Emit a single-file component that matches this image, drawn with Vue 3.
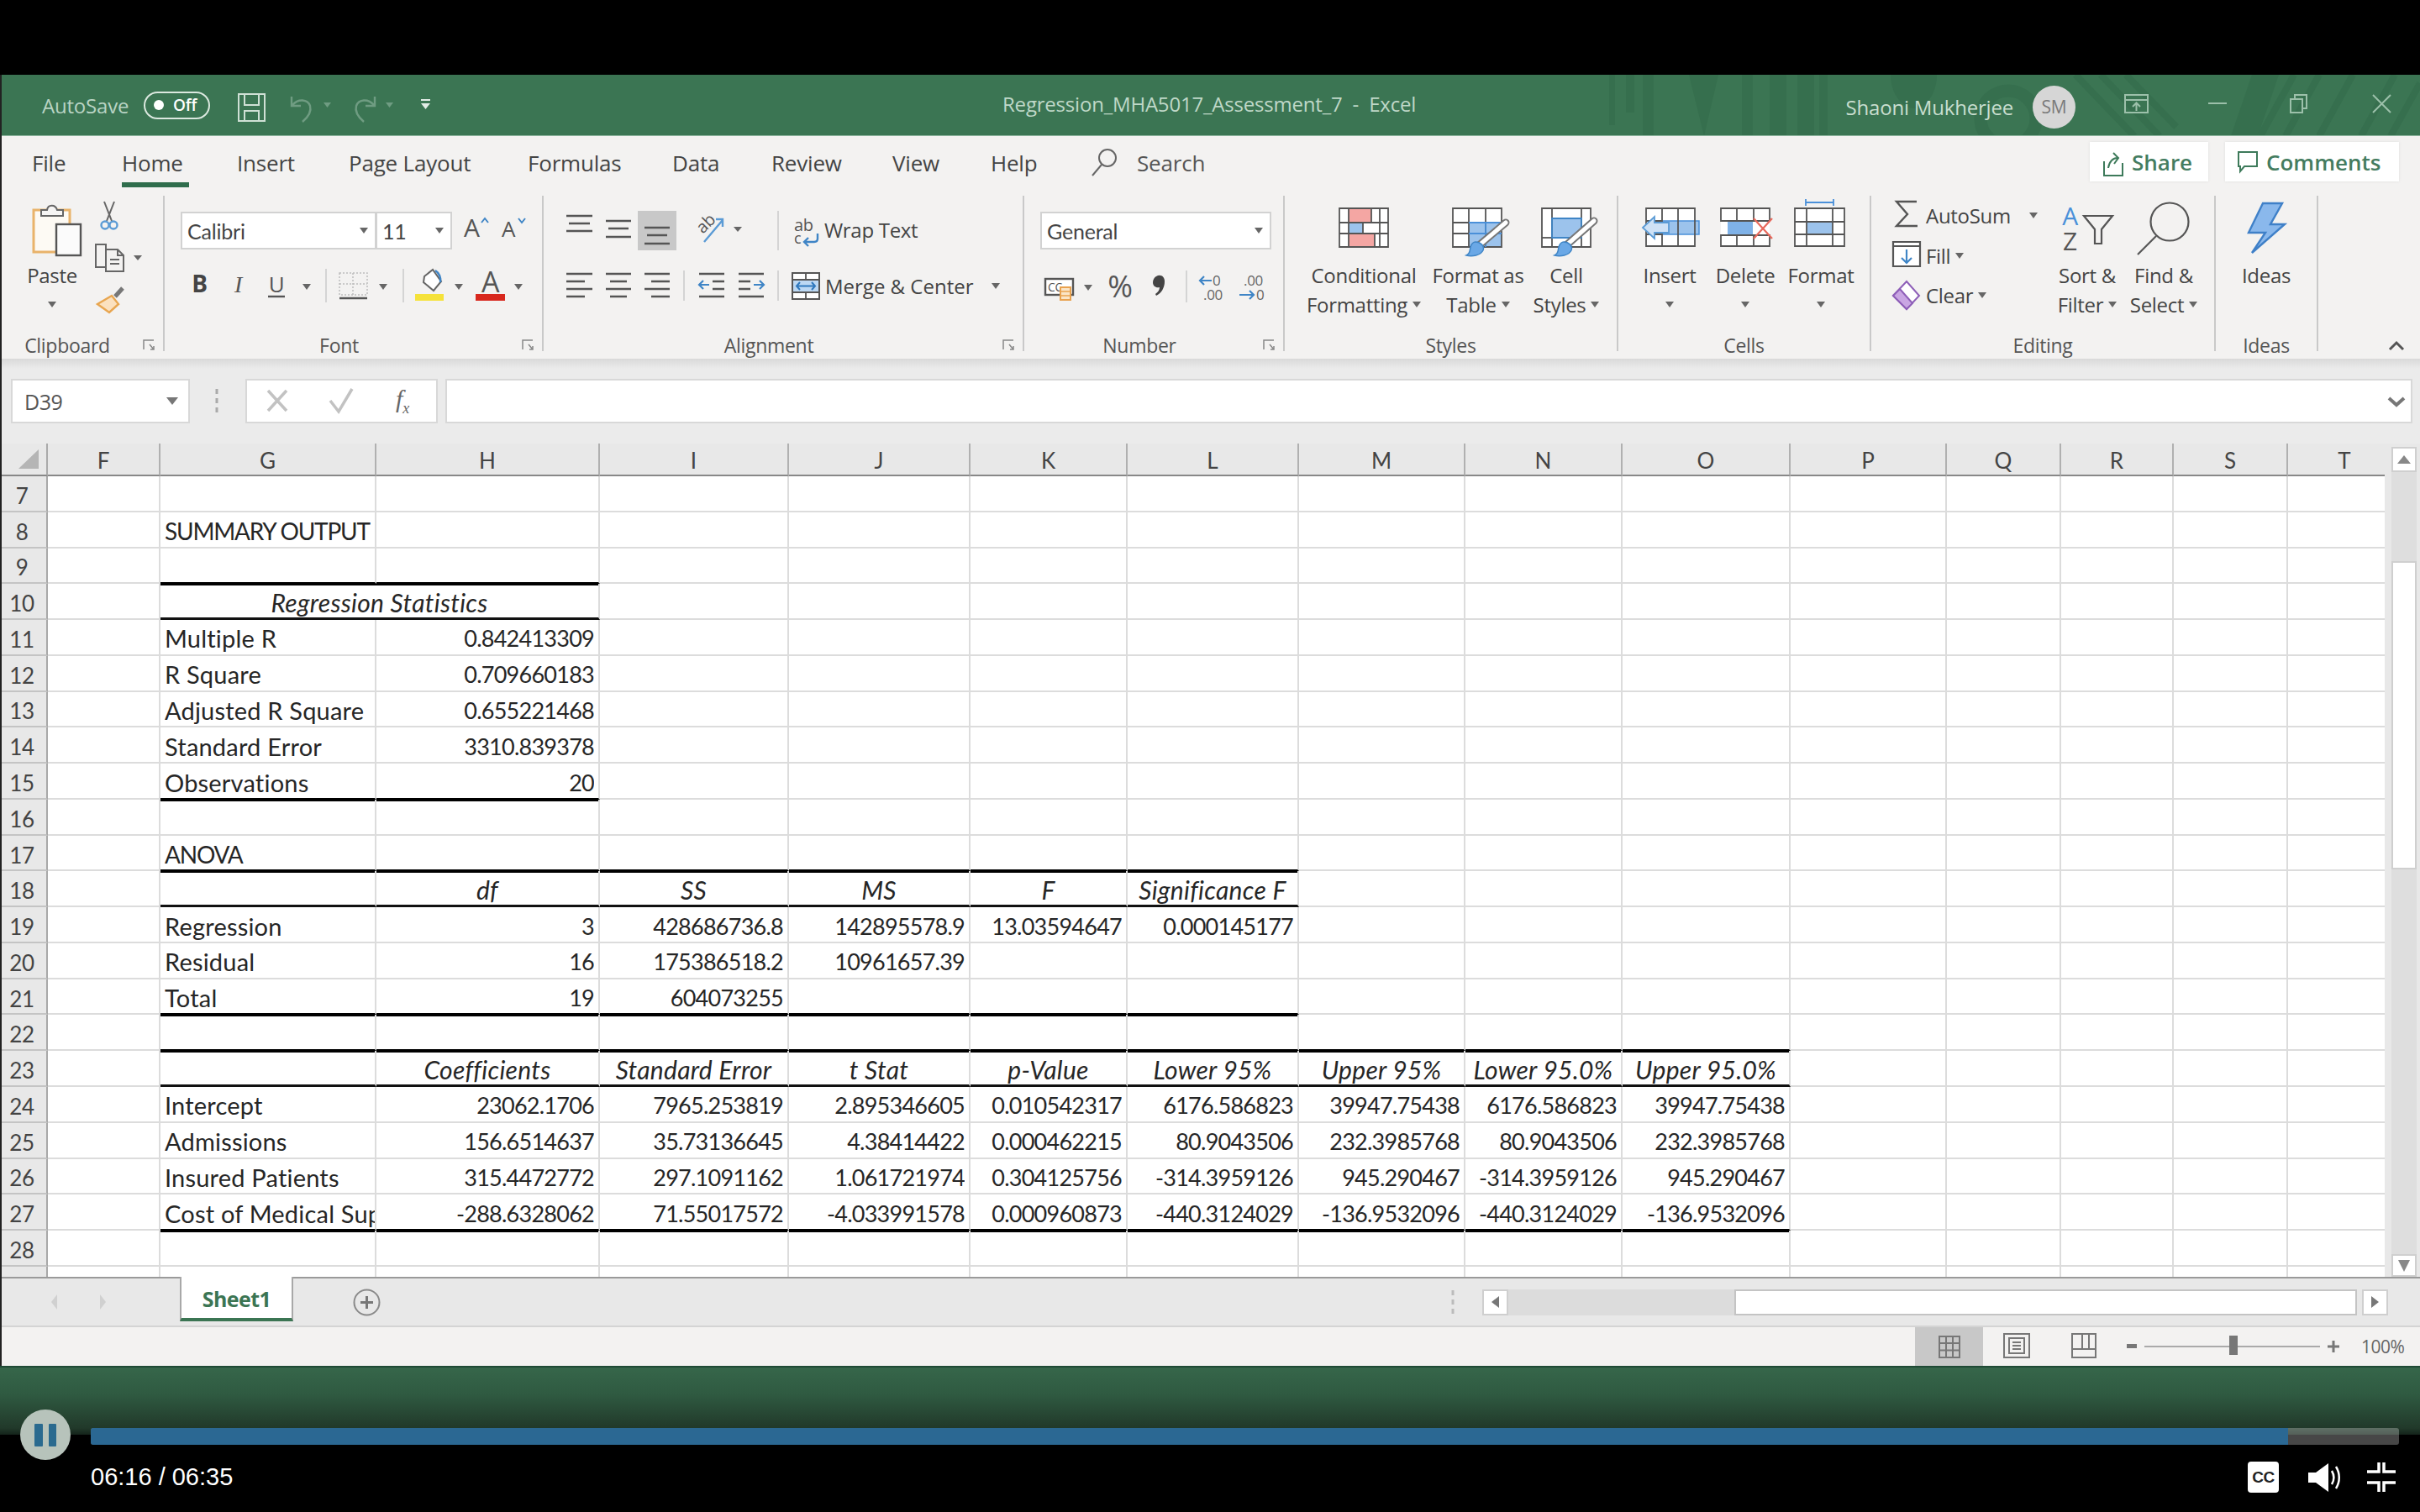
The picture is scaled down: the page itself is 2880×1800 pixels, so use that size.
<script setup>
const columns = ['F', 'G', 'H', 'I', 'J', 'K', 'L', 'M', 'N', 'O', 'P', 'Q', 'R', 'S', 'T']

// regression output, keyed by row number then column
const sheetData = {
  8: { G: 'SUMMARY OUTPUT' },
  10: { G: 'Regression Statistics' },
  11: { G: 'Multiple R', H: '0.842413309' },
  12: { G: 'R Square', H: '0.709660183' },
  13: { G: 'Adjusted R Square', H: '0.655221468' },
  14: { G: 'Standard Error', H: '3310.839378' },
  15: { G: 'Observations', H: '20' },
  17: { G: 'ANOVA' },
  18: { H: 'df', I: 'SS', J: 'MS', K: 'F', L: 'Significance F' },
  19: { G: 'Regression', H: '3', I: '428686736.8', J: '142895578.9', K: '13.03594647', L: '0.000145177' },
  20: { G: 'Residual', H: '16', I: '175386518.2', J: '10961657.39' },
  21: { G: 'Total', H: '19', I: '604073255' },
  23: {
    H: 'Coefficients', I: 'Standard Error', J: 't Stat', K: 'p-Value', L: 'Lower 95%',
    M: 'Upper 95%', N: 'Lower 95.0%', O: 'Upper 95.0%'
  },
  24: {
    G: 'Intercept', H: '23062.1706', I: '7965.253819', J: '2.895346605', K: '0.010542317',
    L: '6176.586823', M: '39947.75438', N: '6176.586823', O: '39947.75438'
  },
  25: {
    G: 'Admissions', H: '156.6514637', I: '35.73136645', J: '4.38414422', K: '0.000462215',
    L: '80.9043506', M: '232.3985768', N: '80.9043506', O: '232.3985768'
  },
  26: {
    G: 'Insured Patients', H: '315.4472772', I: '297.1091162', J: '1.061721974', K: '0.304125756',
    L: '-314.3959126', M: '945.290467', N: '-314.3959126', O: '945.290467'
  },
  27: {
    G: 'Cost of Medical Supplies', H: '-288.6328062', I: '71.55017572', J: '-4.033991578', K: '0.000960873',
    L: '-440.3124029', M: '-136.9532096', N: '-440.3124029', O: '-136.9532096'
  }
}

// table rules: row -> last column and weight, always starting at G
const rules = {
  9: ['H', 'thick'],
  10: ['H', 'thin'],
  15: ['H', 'thick'],
  17: ['L', 'thick'],
  18: ['L', 'thin'],
  21: ['L', 'thick'],
  22: ['O', 'thick'],
  23: ['O', 'thin'],
  27: ['O', 'thick']
}

function cellsFor(n) {
  const data = sheetData[n] || {}
  const rule = rules[n]
  const out = []
  columns.forEach((col, i) => {
    if (n == 10 && col == 'H') return
    const cls = []
    if (rule && i >= 1 && i <= columns.indexOf(rule[0])) cls.push(rule[1])
    if (n == 10 && col == 'G') cls.push('merged', 'head')
    else if (n == 18 || n == 23) cls.push('head')
    else if (n == 8 || n == 17) cls.push('caps')
    else if (col == 'G') cls.push('label')
    else cls.push('num')
    out.push({ col, text: data[col] || '', cls })
  })
  return out
}

const rows = []
for (let n = 7; n <= 29; n++) {
  rows.push({ n, label: n < 29 ? n : '', cells: cellsFor(n) })
}

const progress = (376 / 395) * 100
</script>

<template>
  <div class="page">
    <div class="topblack"></div>

    <div class="window">
      <div class="titlebar">
        <svg class="pattern" width="1030" height="72" viewBox="0 0 1030 72">
          <g fill="#366f4e">
            <rect x="65" width="7" height="60" /><rect x="85" width="10" height="45" /><rect x="105" width="13" height="73" />
            <path d="M160 0h35l-17 73z" />
            <rect x="223" width="13" height="73" /><rect x="256" width="20" height="73" /><rect x="289" width="20" height="73" /><rect x="315" width="10" height="73" />
            <path d="M400 0h55c0 25-15 40-27 40s-28-15-28-40z" />
            <path d="M830 0h32l-25 73h-32z" />
          </g>
          <g fill="none" stroke="#366f4e">
            <circle cx="540" cy="52" r="33" stroke-width="15" />
            <path stroke-width="8" d="M620 0l70 73M650 0l70 73M680 0l60 62M880 0l-40 73M910 0l-40 73M950 0l-40 73M1000 0l-40 73M1030 10l-35 63" />
          </g>
        </svg>
        <div class="title-left">
          <span class="autosave">AutoSave</span>
          <span class="toggle"><i></i><b>Off</b></span>
          <svg class="qat" width="235" height="40" viewBox="0 0 235 40">
            <g fill="none" stroke="#cfe0d5" stroke-width="2">
              <path d="M1 7h31v32H1zM8 7v13h17V7M8 39V27h17v12" />
            </g>
            <g fill="none" stroke="#6f9c82" stroke-width="2.4">
              <path d="M64 10v11h11M65 20c7-8 18-7 21 1 2 7-2 13-9 19" />
              <path d="M163 10v11h-11M162 20c-7-8-18-7-21 1-2 7 2 13 9 19" />
            </g>
            <path fill="#6f9c82" d="M102 17h9l-4.500 6zM176 17h9l-4.500 6z" />
            <path fill="#e2ece6" d="M218 13h11v2h-11zM218 18h11l-5.500 7z" />
          </svg>
        </div>
        <div class="doc-title">Regression_MHA5017_Assessment_7&nbsp; -&nbsp; Excel</div>
        <div class="title-right">
          <span class="user">Shaoni Mukherjee</span>
          <span class="avatar">SM</span>
          <svg class="winbtns" width="317" height="25" viewBox="0 0 317 25">
            <g fill="none" stroke="#9cc0aa" stroke-width="2">
              <path d="M1 2h27v21H1zM1 8h27M14.500 21V12M10 16l4.500-4.500L19 16" />
              <path d="M100 12h22" />
              <path d="M198 7h14v16h-14zM203 7V2h14v16h-5" />
              <path d="M296 2l21 21M317 2l-21 21" />
            </g>
          </svg>
        </div>
      </div>

      <div class="tabs">
        <div class="tablist">
          <span>File</span>
          <span class="active">Home</span>
          <span>Insert</span>
          <span>Page Layout</span>
          <span>Formulas</span>
          <span>Data</span>
          <span>Review</span>
          <span>View</span>
          <span>Help</span>
          <svg width="32" height="36" viewBox="0 0 32 36">
            <g fill="none" stroke="#666" stroke-width="2">
              <circle cx="20" cy="12" r="10" /><path d="M13 20L2 33" />
            </g>
          </svg>
          <span class="search">Search</span>
        </div>
        <div class="share-btns">
          <button class="share">
            <svg width="24" height="34" viewBox="0 0 24 34">
              <g fill="none" stroke="#3d7a5a" stroke-width="2">
                <path d="M1 16v17h22V18M6 24c1-8 6-12 11-12M12 6l6 6-5 7" />
              </g>
            </svg>
            Share
          </button>
          <button class="comments">
            <svg width="24" height="30" viewBox="0 0 24 30">
              <path fill="none" stroke="#3d7a5a" stroke-width="2" d="M1 3h22v17H8l-5 6v-6H1z" />
            </svg>
            Comments
          </button>
        </div>
      </div>

      <div class="ribbon">
        <!-- Clipboard -->
        <section class="group g-clip">
          <div class="gbody">
            <div class="big big-74">
              <svg width="74" height="77" viewBox="0 0 74 77">
                <rect x="15" y="17" width="43" height="50" fill="#fdfaf4" stroke="#e9b36b" stroke-width="3" />
                <path d="M24 24v-7h7c1-7 10-7 12 0h7v7z" fill="#f6f5f4" stroke="#666" stroke-width="2" />
                <rect x="42" y="34" width="29" height="37" fill="#fbfbfb" stroke="#555" stroke-width="2.400" />
              </svg>
              <span class="lbl">Paste</span>
              <span class="lbl"><i class="caret"></i></span>
            </div>
            <svg class="clip-tools" width="60" height="135" viewBox="0 0 60 135">
              <g fill="none" stroke="#666" stroke-width="2">
                <path d="M14 23L23 0M20 23L11 0" />
                <path d="M1 51h12v27H1zM13 57h14l7 7v19H13zM27 57v7h7M18 69h11M18 74h11" />
              </g>
              <g fill="none" stroke="#5b9bd5" stroke-width="2.400">
                <circle cx="12" cy="28" r="4.500" /><circle cx="22" cy="28" r="4.500" />
              </g>
              <path d="M46 64h10l-5 6z" fill="#666" />
              <path d="M3 122l17-10 8 10-11 10z" fill="#fbe1bf" stroke="#e8a650" stroke-width="2.400" />
              <path d="M24 113l9-10" stroke="#777" stroke-width="5" />
            </svg>
          </div>
          <div class="glabel"><span>Clipboard</span><svg class="launch" viewBox="0 0 16 14" width="16" height="14"><path fill="none" stroke="#888" stroke-width="1.500" d="M1 12V1h12M8 6l5 6M13 8v4H9" /></svg></div>
        </section>

        <!-- Font -->
        <section class="group g-font">
          <div class="gbody col">
            <div class="frow">
              <div class="combo w233">Calibri<i class="caret"></i></div>
              <div class="combo w91">11<i class="caret"></i></div>
              <svg width="87" height="45" viewBox="0 0 87 45">
                <text x="14" y="30" class="gl" font-size="30" fill="#555">A</text>
                <path d="M35 13l4-5 4 5" fill="none" stroke="#3f85c6" stroke-width="2" />
                <text x="59" y="30" class="gl" font-size="26" fill="#555">A</text>
                <path d="M79 8l4 5 4-5" fill="none" stroke="#3f85c6" stroke-width="2" />
              </svg>
            </div>
            <svg class="font-r2" width="414" height="40" viewBox="0 0 414 40">
              <text x="23.500" y="28" class="gl mid" font-size="28" font-weight="700" fill="#444">B</text>
              <text x="69.500" y="28" class="gl mid it" font-size="28" fill="#555">I</text>
              <text x="115" y="28" class="gl mid" font-size="26" fill="#555">U</text>
              <path d="M105 33h20" stroke="#555" stroke-width="2.400" />
              <path d="M146 18h10l-5 7zM237 18h10l-5 7zM327 18h10l-5 7zM398 18h10l-5 7z" fill="#666" />
              <path d="M174 0v40M266 0v40" stroke="#d4d4d4" stroke-width="2" />
              <g fill="none" stroke="#bdbdbd" stroke-width="1.500" stroke-dasharray="2 2">
                <path d="M190 5h33v26h-33zM206 5v26M190 18h33" />
              </g>
              <path d="M190 35h33" stroke="#555" stroke-width="2.600" />
              <path d="M291 9l10-8 10 14-9 11-12-10z" fill="#fff" stroke="#666" stroke-width="2" />
              <path d="M304 2c5 3 7 9 6 14" fill="none" stroke="#3f85c6" stroke-width="2.400" />
              <rect x="280" y="30" width="34" height="8" fill="#f5e23a" />
              <text x="369.500" y="28" class="gl mid" font-size="34" fill="#555">A</text>
              <rect x="352" y="30" width="35" height="8" fill="#d8281e" />
            </svg>
          </div>
          <div class="glabel"><span>Font</span><svg class="launch" viewBox="0 0 16 14" width="16" height="14"><path fill="none" stroke="#888" stroke-width="1.500" d="M1 12V1h12M8 6l5 6M13 8v4H9" /></svg></div>
        </section>

        <!-- Alignment -->
        <section class="group g-align">
          <div class="gbody col">
            <div class="arow">
              <svg width="312" height="47" viewBox="0 0 312 47">
                <rect x="93" width="46" height="47" fill="#c8c8c8" />
                <g stroke="#555" stroke-width="2.600">
                  <path d="M8 6h31M11 15h25M8 24h31" />
                  <path d="M55 12h30M58 21h24M55 31h30" />
                  <path d="M101 20h30M104 29h24M101 39h30" />
                </g>
                <text x="164" y="24" class="gl" font-size="20" fill="#555" transform="rotate(-45 172 18)">ab</text>
                <path d="M172 37l22-26M186 10h8v9" fill="none" stroke="#5b9bd5" stroke-width="2.400" />
                <path d="M207 19h10l-5 6z" fill="#666" />
                <path d="M260 0v47" stroke="#d4d4d4" stroke-width="2" />
                <text x="279" y="24" class="gl" font-size="20" fill="#555">ab</text>
                <text x="279" y="39" class="gl" font-size="18" fill="#555">c</text>
                <path d="M307 27v6c0 3-2 4-4 4h-12M296 32l-5 5 5 5" fill="none" stroke="#3f85c6" stroke-width="2.400" />
              </svg>
              <span class="rtext">Wrap Text</span>
            </div>
            <div class="arow a2">
              <svg width="310" height="36" viewBox="0 0 310 36">
                <g stroke="#555" stroke-width="2.600">
                  <path d="M8 4h31M8 13h22M8 22h31M8 31h22" />
                  <path d="M55 4h30M60 13h20M55 22h30M60 31h20" />
                  <path d="M101 4h30M109 13h22M101 22h30M109 31h22" />
                  <path d="M166 4h30M182 13h14M182 22h14M166 31h30" />
                  <path d="M213 4h30M213 13h14M213 22h14M213 31h30" />
                </g>
                <path d="M178 17h-12M171 12l-5 5 5 5M231 17h12M238 12l5 5-5 5" fill="none" stroke="#3f85c6" stroke-width="2.200" />
                <path d="M148 0v36M260 0v36" stroke="#d4d4d4" stroke-width="2" />
                <rect x="277" y="3" width="32" height="31" fill="#fff" stroke="#555" stroke-width="2" />
                <rect x="278" y="11" width="30" height="15" fill="#bcd8f3" />
                <path d="M277 11h32M277 26h32M293 3v8M293 26v8" stroke="#555" stroke-width="1.800" />
                <path d="M282 18.500h22M286 14l-4 4.500 4 4.500M300 14l4 4.500-4 4.500" fill="none" stroke="#2f78bd" stroke-width="2" />
              </svg>
              <span class="rtext r2">Merge &amp; Center</span>
              <i class="caret merge-caret"></i>
            </div>
          </div>
          <div class="glabel"><span>Alignment</span><svg class="launch" viewBox="0 0 16 14" width="16" height="14"><path fill="none" stroke="#888" stroke-width="1.500" d="M1 12V1h12M8 6l5 6M13 8v4H9" /></svg></div>
        </section>

        <!-- Number -->
        <section class="group g-number">
          <div class="gbody col">
            <div class="combo w275">General<i class="caret"></i></div>
            <svg class="num-r2" width="275" height="38" viewBox="0 0 275 38">
              <rect x="6" y="10" width="33" height="19" fill="#fff" stroke="#555" stroke-width="2.400" />
              <text x="9" y="25" class="gl" font-size="14" fill="#555">CC</text>
              <path d="M24 20h12v15H24z" fill="#fbe5c6" stroke="#e9a24f" stroke-width="2" />
              <path d="M24 25h12M24 30h12" stroke="#e9a24f" stroke-width="1.500" />
              <path d="M52 17h10l-5 7z" fill="#666" />
              <text x="95" y="32" class="gl mid" font-size="36" fill="#555">%</text>
              <path d="M138 7c5-3 10 0 10 6 0 8-4 14-10 17l-1-2c3-2 5-5 5-8-4 1-8-1-8-6 0-3 2-6 4-7z" fill="#444" />
              <path d="M174 0v38" stroke="#d4d4d4" stroke-width="2" />
              <text x="205" y="18" class="gl" font-size="17" fill="#666">0</text>
              <text x="194" y="35" class="gl" font-size="17" fill="#666">.00</text>
              <path d="M204 12h-14M195 7l-5 5 5 5" fill="none" stroke="#3f85c6" stroke-width="2.200" />
              <text x="242" y="18" class="gl" font-size="17" fill="#666">.00</text>
              <text x="257" y="35" class="gl" font-size="17" fill="#666">0</text>
              <path d="M237 29h17M249 24l5 5-5 5" fill="none" stroke="#3f85c6" stroke-width="2.200" />
            </svg>
          </div>
          <div class="glabel"><span>Number</span><svg class="launch" viewBox="0 0 16 14" width="16" height="14"><path fill="none" stroke="#888" stroke-width="1.500" d="M1 12V1h12M8 6l5 6M13 8v4H9" /></svg></div>
        </section>

        <!-- Styles -->
        <section class="group g-styles">
          <div class="gbody">
            <div class="big big-130">
              <svg width="60" height="77" viewBox="0 0 60 77">
                <rect x="1" y="15" width="58" height="46" fill="#fff" />
                <rect x="12" y="15" width="27" height="17" fill="#f4a6a3" />
                <rect x="12" y="32" width="17" height="13" fill="#9cc3ec" />
                <rect x="12" y="45" width="31" height="16" fill="#f4a6a3" />
                <path d="M1 15h58v46H1zM1 32h58M1 45h58M12 15v46M39 15v17M49 15v46M43 45v16M29 32v13" fill="none" stroke="#555" stroke-width="1.800" />
              </svg>
              <span class="lbl">Conditional</span>
              <span class="lbl">Formatting<i class="caret c-inl"></i></span>
            </div>
            <div class="big big-130">
              <svg width="66" height="77" viewBox="0 0 66 77">
                <rect x="3" y="15" width="58" height="46" fill="#fff" />
                <rect x="22" y="32" width="39" height="29" fill="#9cc3ec" />
                <path d="M3 15h58v46H3zM3 32h58M3 45h58M22 15v46M42 15v46" fill="none" stroke="#555" stroke-width="1.800" />
                <path d="M22 32h39M22 45h39M42 32v29" fill="none" stroke="#4a90d9" stroke-width="1.800" />
                <path d="M66 32L33 60" stroke="#777" stroke-width="9" stroke-linecap="round" />
                <path d="M66 32L33 60" stroke="#fff" stroke-width="5" stroke-linecap="round" />
                <path d="M30 55c6 0 11 5 9 10-3 6-13 8-20 6 5-2 4-6 5-10 1-3 3-6 6-6z" fill="#6aa8e6" stroke="#3f85c6" stroke-width="1.500" />
              </svg>
              <span class="lbl">Format as</span>
              <span class="lbl">Table<i class="caret c-inl"></i></span>
            </div>
            <div class="big big-68">
              <svg width="66" height="77" viewBox="0 0 66 77">
                <rect x="4" y="15" width="58" height="46" fill="#fff" />
                <rect x="16" y="27" width="35" height="23" fill="#9cc3ec" />
                <path d="M4 15h58v46H4zM16 15v46M51 15v46" fill="none" stroke="#555" stroke-width="1.800" />
                <path d="M4 50h12" stroke="#555" stroke-width="1.800" />
                <path d="M16 27h35v23H16z" fill="none" stroke="#3f85c6" stroke-width="1.800" />
                <path d="M66 30L33 59" stroke="#777" stroke-width="9" stroke-linecap="round" />
                <path d="M66 30L33 59" stroke="#fff" stroke-width="5" stroke-linecap="round" />
                <path d="M30 55c6 0 11 5 9 10-3 6-13 8-20 6 5-2 4-6 5-10 1-3 3-6 6-6z" fill="#6aa8e6" stroke="#3f85c6" stroke-width="1.500" />
              </svg>
              <span class="lbl">Cell</span>
              <span class="lbl">Styles<i class="caret c-inl"></i></span>
            </div>
          </div>
          <div class="glabel"><span>Styles</span></div>
        </section>

        <!-- Cells -->
        <section class="group g-cells">
          <div class="gbody">
            <div class="big big-80">
              <svg width="70" height="77" viewBox="0 0 70 77">
                <rect x="7" y="15" width="58" height="45" fill="#fff" />
                <rect x="26" y="30" width="44" height="16" fill="#9cc3ec" stroke="#4a90d9" stroke-width="1.500" />
                <path d="M7 15h58v45H7zM7 30h19M7 46h19M26 15v45M45 15v15M45 46v14M45 30v16" fill="none" stroke="#555" stroke-width="1.800" />
                <path d="M3 38l14-13v7h17v12H17v7z" fill="#cfe2f6" stroke="#5b9bd5" stroke-width="1.800" />
              </svg>
              <span class="lbl">Insert</span>
              <span class="lbl"><i class="caret"></i></span>
            </div>
            <div class="big big-80">
              <svg width="70" height="77" viewBox="0 0 70 77">
                <rect x="6" y="15" width="58" height="45" fill="#fff" />
                <rect x="14" y="31" width="30" height="15" fill="#7fb2e8" />
                <path d="M6 15h58v15H6zM6 47h58v13H6zM25 15v15M25 47v13M45 15v15M45 47v13" fill="none" stroke="#555" stroke-width="1.800" />
                <path d="M45 27l22 24M67 27L45 51" stroke="#e8695c" stroke-width="2.200" />
              </svg>
              <span class="lbl">Delete</span>
              <span class="lbl"><i class="caret"></i></span>
            </div>
            <div class="big big-80">
              <svg width="70" height="77" viewBox="0 0 70 77">
                <rect x="4" y="15" width="59" height="45" fill="#fff" />
                <rect x="18" y="31" width="31" height="15" fill="#9cc3ec" />
                <path d="M4 15h59v45H4zM4 31h59M4 46h59M18 15v45M49 15v45" fill="none" stroke="#555" stroke-width="1.800" />
                <path d="M17 8h33M17 4v8M50 4v8" stroke="#4a90d9" stroke-width="1.800" />
              </svg>
              <span class="lbl">Format</span>
              <span class="lbl"><i class="caret"></i></span>
            </div>
          </div>
          <div class="glabel"><span>Cells</span></div>
        </section>

        <!-- Editing -->
        <section class="group g-edit">
          <div class="gbody">
            <div class="stack">
              <div class="erow">
                <svg width="34" height="47" viewBox="0 0 34 47">
                  <path d="M29 7H5l13 15L5 36h25" fill="none" stroke="#555" stroke-width="2.400" />
                </svg>
                <span>AutoSum</span><i class="caret c-sum"></i>
              </div>
              <div class="erow">
                <svg width="34" height="47" viewBox="0 0 34 47">
                  <path d="M1 7h32v29H1zM1 12h32" fill="#fff" stroke="#555" stroke-width="2.200" />
                  <path d="M17 16v16M11 26l6 6 6-6" fill="none" stroke="#3f85c6" stroke-width="2.200" />
                </svg>
                <span>Fill</span><i class="caret c-inl"></i>
              </div>
              <div class="erow">
                <svg width="34" height="47" viewBox="0 0 34 47">
                  <path d="M1 24L17 7l15 17-15 16z" fill="#fff" stroke="#8e5fb8" stroke-width="2" />
                  <path d="M1 24l8-8 15 17-7 7z" fill="#c9a6e3" stroke="#8e5fb8" stroke-width="2" />
                </svg>
                <span>Clear</span><i class="caret c-inl"></i>
              </div>
            </div>
            <div class="big big-80">
              <svg width="80" height="77" viewBox="0 0 80 77">
                <text x="19.500" y="35" class="gl mid" font-size="30" fill="#4a90d9">A</text>
                <text x="19.500" y="65" class="gl mid" font-size="30" fill="#555">Z</text>
                <path d="M36 24h34L57 40v17h-8V40z" fill="none" stroke="#555" stroke-width="2.200" />
              </svg>
              <span class="lbl">Sort &amp;</span>
              <span class="lbl">Filter<i class="caret c-inl"></i></span>
            </div>
            <div class="big big-80 find">
              <svg width="80" height="77" viewBox="0 0 80 77">
                <circle cx="47" cy="31" r="22.500" fill="none" stroke="#555" stroke-width="2.200" />
                <path d="M31 48L9 70" stroke="#555" stroke-width="2.200" />
              </svg>
              <span class="lbl">Find &amp;</span>
              <span class="lbl">Select<i class="caret c-inl"></i></span>
            </div>
          </div>
          <div class="glabel"><span>Editing</span></div>
        </section>

        <!-- Ideas -->
        <section class="group g-ideas">
          <div class="gbody">
            <div class="big big-122">
              <svg width="60" height="77" viewBox="0 0 60 77">
                <path d="M26 9L9 44h20L13 68l39-34H35l14-25z" fill="#8ab8ec" stroke="#3f80c8" stroke-width="2.400" />
              </svg>
              <span class="lbl">Ideas</span>
            </div>
          </div>
          <div class="glabel"><span>Ideas</span></div>
        </section>

        <svg class="collapse" width="20" height="12" viewBox="0 0 20 12">
          <path d="M2 10l8-8 8 8" fill="none" stroke="#555" stroke-width="3" />
        </svg>
      </div>

      <div class="formulabar">
        <div class="namebox">D39<i class="caret"></i></div>
        <svg class="grip" width="8" height="30" viewBox="0 0 8 30">
          <path d="M4 1v6M4 12v6M4 23v6" stroke="#aaa" stroke-width="3" />
        </svg>
        <div class="fxbox">
          <svg width="120" height="40" viewBox="0 0 120 40">
            <path d="M8 7l22 24M30 7L8 31" stroke="#c2c2c2" stroke-width="3.500" />
            <path d="M82 19l10 13 16-27" fill="none" stroke="#c2c2c2" stroke-width="3.500" />
          </svg>
          <span>f<sub>x</sub></span>
        </div>
        <div class="formula">
          <svg width="24" height="14" viewBox="0 0 24 14">
            <path d="M3 3l9 8 9-8" fill="none" stroke="#777" stroke-width="4" />
          </svg>
        </div>
      </div>

      <div class="sheet-wrap">
        <div class="grid">
          <div class="corner">
            <svg width="24" height="23" viewBox="0 0 24 23"><path d="M24 0v23H0z" fill="#b5b5b5" /></svg>
          </div>
          <div v-for="c in columns" :key="c" class="colhead">{{ c }}</div>
          <template v-for="row in rows" :key="row.n">
            <div class="rowhead">{{ row.label }}</div>
            <div v-for="cell in row.cells" :key="cell.col" class="cell" :class="cell.cls">
              <span>{{ cell.text }}</span>
            </div>
          </template>
        </div>
        <div class="vscroll">
          <div class="sbtn up"><svg width="16" height="10" viewBox="0 0 16 10"><path d="M8 0l8 10H0z" fill="#888" /></svg></div>
          <div class="vtrack">
            <div class="vthumb"></div>
          </div>
          <div class="sbtn down"><svg width="14" height="14" viewBox="0 0 14 14"><path d="M0 0h14L7 14z" fill="#888" /></svg></div>
        </div>
      </div>

      <div class="sheetbar">
        <svg class="nav" width="214" height="30" viewBox="0 0 214 30">
          <path d="M68 6l-7 9 7 9zM119 6l7 9-7 9z" fill="#d0d0d0" />
        </svg>
        <div class="sheettab">Sheet1</div>
        <svg class="addsheet" width="33" height="33" viewBox="0 0 33 33">
          <circle cx="16.500" cy="16.500" r="15" fill="none" stroke="#8a8a8a" stroke-width="2" />
          <path d="M16.500 9v15M9 16.500h15" stroke="#777" stroke-width="3" />
        </svg>
        <div class="hscroll">
          <svg width="10" height="30" viewBox="0 0 10 30"><path d="M5 1v6M5 12v6M5 23v6" stroke="#bbb" stroke-width="3" /></svg>
          <div class="hbtn"><svg width="9" height="14" viewBox="0 0 9 14"><path d="M9 0v14L0 7z" fill="#777" /></svg></div>
          <div class="htrack"><div class="hthumb"></div></div>
          <div class="hbtn"><svg width="9" height="14" viewBox="0 0 9 14"><path d="M0 0v14l9-7z" fill="#777" /></svg></div>
        </div>
      </div>

      <div class="statusbar">
        <div class="viewbtn">
          <svg width="26" height="27" viewBox="0 0 26 27">
            <path d="M1 1h24v25H1zM1 9h24M1 17.500h24M9 1v25M17 1v25" fill="none" stroke="#777" stroke-width="2" />
          </svg>
        </div>
        <svg width="440" height="46" viewBox="0 0 440 46">
          <g fill="none" stroke="#777" stroke-width="2">
            <path d="M25 8h30v28H25zM31 13h18v18H31z" />
            <path d="M35 18h10M35 22h10M35 26h10" />
            <path d="M106 8h28v28h-28zM106 26h28M118 8v18M126 8v18" />
          </g>
          <path d="M171 20h12v5h-12z" fill="#777" />
          <path d="M192 23h209" stroke="#aaa" stroke-width="2" />
          <rect x="293" y="10" width="10" height="23" fill="#777" />
          <path d="M410 23h14M417 16v14" stroke="#777" stroke-width="3" />
        </svg>
        <span class="zoomval">100%</span>
      </div>
    </div>

    <div class="fade"></div>
    <div class="controls">
      <div class="progress">
        <div class="bar" :style="{ width: progress + '%' }"></div>
      </div>
      <div class="playbtn"><i></i><i></i></div>
      <div class="meta">
        <span class="time">06:16 / 06:35</span>
        <span class="cc">CC</span>
        <svg class="vol" width="41" height="34" viewBox="0 0 41 34">
          <path d="M0 11h9L24 0v34L9 23H0z" fill="#fff" />
          <path d="M28 9c3 5 3 11 0 16M33 4c5 8 5 18 0 26" fill="none" stroke="#fff" stroke-width="2.500" />
        </svg>
        <svg class="fs" width="35" height="35" viewBox="0 0 35 35">
          <path d="M0 11h14V0M34 11H20V0M0 24h14v11M34 24H20v11" fill="none" stroke="#fff" stroke-width="3.500" />
        </svg>
      </div>
    </div>
  </div>
</template>

<style scoped>
.page {
  width: 2880px;
  height: 1800px;
  overflow: hidden;
  background: #000;
  font-family: "Open Sans", "Liberation Sans", sans-serif;
  display: flex;
  flex-direction: column;
}

svg {
  display: block;
  flex: none;
  overflow: visible;
}

.gl {
  font-family: "Open Sans", "Liberation Sans", sans-serif;
}

.mid {
  text-anchor: middle;
}

.it {
  font-style: italic;
  font-family: "Liberation Serif", serif;
}

.topblack {
  height: 89px;
  flex: none;
}

.window {
  flex: none;
  position: relative;
  height: 1537px;
  display: flex;
  flex-direction: column;
  background: #f3f2f1;
}

.window::after {
  content: "";
  position: absolute;
  left: 0;
  top: 0;
  bottom: 0;
  width: 2px;
  background: #222;
}

/* title bar */
.titlebar {
  height: 73px;
  flex: none;
  position: relative;
  display: flex;
  align-items: center;
  background: #3b7553;
  color: #bcd6c5;
  border-bottom: 1px solid #8fb7a0;
  box-sizing: border-box;
  font-size: 24px;
  letter-spacing: -0.2px;
}

.pattern {
  position: absolute;
  left: 1850px;
  top: 0;
  overflow: hidden;
}

.title-left {
  width: 1193px;
  padding-left: 50px;
  box-sizing: border-box;
  display: flex;
  align-items: center;
  position: relative;
}

.autosave {
  width: 121px;
  color: #b9d4c4;
}

.toggle {
  width: 79px;
  height: 33px;
  box-sizing: border-box;
  border: 2.5px solid #dbe8df;
  border-radius: 17px;
  display: flex;
  align-items: center;
  padding-left: 10px;
  color: #fff;
  font-size: 19px;
}

.toggle b {
  font-weight: 600;
}

.toggle i {
  width: 12px;
  height: 12px;
  border-radius: 50%;
  background: #fff;
  margin-right: 11px;
}

.qat {
  margin-left: 33px;
}

.doc-title {
  position: relative;
  width: 494px;
  white-space: nowrap;
  color: #bfd8c8;
  margin-top: -4px;
}

.title-right {
  position: relative;
  margin-left: auto;
  padding-right: 35px;
  display: flex;
  align-items: center;
}

.user {
  color: #c9decf;
  white-space: nowrap;
  margin-top: 5px;
}

.avatar {
  width: 51px;
  height: 51px;
  margin-left: 23px;
  border-radius: 50%;
  background: #d6d6d6;
  color: #7a7a7a;
  font-size: 21px;
  display: flex;
  align-items: center;
  justify-content: center;
  margin-top: 4px;
}

.winbtns {
  margin-left: 58px;
  margin-top: -4px;
}

/* ribbon tabs */
.tabs {
  height: 66px;
  flex: none;
  display: flex;
  align-items: center;
  justify-content: space-between;
  color: #444;
  font-size: 26px;
  letter-spacing: -0.2px;
}

.tablist {
  display: grid;
  grid-template-columns: 107px 137px 133px 213px 172px 118px 144px 117px 119px 55px auto;
  align-items: center;
  padding-left: 38px;
  margin-top: -2px;
}

.tablist .active {
  position: relative;
}

.tablist .active::after {
  content: "";
  position: absolute;
  left: 0;
  width: 80px;
  top: 41px;
  height: 6px;
  background: #2f6d4c;
}

.search {
  color: #555;
}

.share-btns {
  display: flex;
  gap: 20px;
  padding-right: 25px;
  margin-top: -5px;
}

.share-btns button {
  border: 0;
  height: 47px;
  background: #fff;
  font: inherit;
  font-weight: 600;
  color: #447c60;
  display: flex;
  align-items: center;
  box-shadow: 0 0 3px #ddd;
  padding: 0;
}

.share {
  width: 141px;
  padding-left: 16px !important;
  gap: 10px;
}

.comments {
  width: 207px;
  padding-left: 15px !important;
  gap: 10px;
}

/* ribbon body */
.ribbon {
  height: 199px;
  flex: none;
  padding-top: 5px;
  box-sizing: border-box;
  display: flex;
  align-items: flex-start;
  color: #444;
  font-size: 24px;
  letter-spacing: -0.3px;
  position: relative;
  background: #f3f2f1;
}

.group {
  height: 185px;
  flex: none;
  box-sizing: border-box;
  border-right: 2px solid #c9c9c9;
}

.g-clip { width: 196px; }
.g-font { width: 451px; }
.g-align { width: 572px; }
.g-number { width: 310px; }
.g-styles { width: 397px; }
.g-cells { width: 301px; }
.g-edit { width: 410px; }
.g-ideas { width: 122px; }

.gbody {
  height: 164px;
  box-sizing: border-box;
  display: flex;
}

.gbody.col {
  flex-direction: column;
}

.glabel {
  height: 28px;
  display: flex;
  align-items: center;
  font-size: 23px;
  color: #555;
}

.glabel span {
  flex: 1;
  text-align: center;
}

.launch {
  margin: 0 8px 0 10px;
}

.big {
  flex: none;
  display: flex;
  flex-direction: column;
  align-items: center;
}

.big-74 { width: 74px; margin-left: 25px; }
.big-130 { width: 130px; }
.big-68 { width: 68px; }
.big-80 { width: 80px; }
.big-122 { width: 120px; }

.lbl {
  height: 35px;
  line-height: 35px;
  white-space: nowrap;
  display: flex;
  align-items: center;
}

.clip-tools {
  margin: 7px 0 0 14px;
}

.caret {
  display: inline-block;
  width: 0;
  height: 0;
  border-left: 5.5px solid transparent;
  border-right: 5.5px solid transparent;
  border-top: 7px solid #666;
  flex: none;
}

.c-inl {
  margin-left: 6px;
}

.c-sum {
  margin-left: 22px;
}

/* font */
.g-font .gbody {
  padding: 19px 0 0 19px;
}

.frow {
  display: flex;
}

.combo {
  height: 45px;
  box-sizing: border-box;
  background: #fff;
  border: 2px solid #d2d2d2;
  font-family: "Lato", "Open Sans", sans-serif;
  font-size: 25px;
  letter-spacing: -0.2px;
  padding: 0 8px 0 6px;
  display: flex;
  align-items: center;
  justify-content: space-between;
  color: #444;
}

.w233 { width: 233px; }
.w91 { width: 91px; margin-left: -1px; }
.w275 { width: 275px; }

.font-r2 {
  margin: 23px 0 0 -1px;
}

/* alignment */
.g-align .gbody {
  padding: 18px 0 0 19px;
}

.arow {
  display: flex;
  align-items: center;
  height: 47px;
  white-space: nowrap;
}

.a2 {
  height: 36px;
  margin-top: 24px;
}

.rtext {
  margin-left: 3px;
  margin-top: -2px;
}

.rtext.r2 {
  margin-left: 6px;
  margin-top: 0;
  letter-spacing: 0;
}

.merge-caret {
  margin-left: 22px;
}

/* number */
.g-number .gbody {
  padding: 19px 0 0 19px;
}

.num-r2 {
  margin-top: 25px;
}

/* styles, cells, editing */
.g-styles .gbody {
  padding-left: 29px;
  gap: 6px;
}

.g-cells .gbody {
  padding-left: 21px;
  gap: 10px;
}

.g-edit .gbody {
  padding-left: 25px;
}

.stack {
  width: 192px;
  flex: none;
}

.erow {
  height: 47.5px;
  display: flex;
  align-items: center;
  white-space: nowrap;
}

.erow span {
  margin-left: 6px;
}

.find {
  margin-left: 11px;
}

.collapse {
  margin: 173px 0 0 83px;
}

/* formula bar */
.formulabar {
  height: 101px;
  flex: none;
  box-sizing: border-box;
  padding: 24px 9px 0 13px;
  display: flex;
  background: linear-gradient(#d9d9d9, #ebebeb 12px, #ebebeb);
}

.namebox,
.fxbox,
.formula {
  height: 53px;
  box-sizing: border-box;
  background: #fff;
  border: 2px solid #d8d8d8;
  display: flex;
  align-items: center;
}

.namebox {
  width: 213px;
  padding: 0 12px 0 14px;
  justify-content: space-between;
  color: #555;
  font-size: 25px;
  letter-spacing: -0.5px;
}

.namebox .caret {
  border-left-width: 7px;
  border-right-width: 7px;
  border-top-width: 9px;
  border-top-color: #777;
}

.grip {
  margin: 11px 30px 0 28px;
}

.fxbox {
  width: 229px;
  padding-left: 17px;
  color: #666;
  font-family: "Liberation Serif", serif;
  font-style: italic;
  font-size: 30px;
}

.fxbox span {
  margin-left: 40px;
}

.fxbox sub {
  font-size: 18px;
}

.formula {
  flex: 1;
  margin-left: 9px;
  justify-content: flex-end;
  padding-right: 5px;
}

/* sheet */
.sheet-wrap {
  height: 992px;
  flex: none;
  display: flex;
  background: #e8e8e8;
  overflow: hidden;
  border-bottom: 2px solid #9a9a9a;
  box-sizing: content-box;
  margin-bottom: -2px;
}

.grid {
  width: 2838px;
  height: 992px;
  flex: none;
  overflow: hidden;
  background: #fff;
  display: grid;
  grid-template-columns: 57px 134px 257px 266px 225px 216px 187px 204px 198px 187px 200px 186px 136px 134px 136px 136px;
  grid-template-rows: 39px repeat(23, 42.77px);
  font-family: "Lato", "Open Sans", sans-serif;
  font-size: 27px;
  letter-spacing: -0.75px;
  color: #262626;
}

.corner {
  background: #e8e8e8;
  display: flex;
  align-items: flex-end;
  justify-content: flex-end;
  padding: 0 9px 7px 0;
  border-bottom: 2px solid #888;
  border-right: 2px solid #aaa;
  box-sizing: border-box;
}

.colhead {
  background: #e8e8e8;
  border-bottom: 2px solid #888;
  border-right: 2px solid #b0b0b0;
  box-sizing: border-box;
  display: flex;
  align-items: center;
  justify-content: center;
  color: #444;
  font-size: 26px;
  letter-spacing: 0;
  padding-top: 2px;
}

.rowhead {
  background: #e8e8e8;
  border-bottom: 2px solid #c4c4c4;
  border-right: 2px solid #a8a8a8;
  box-sizing: border-box;
  display: flex;
  align-items: center;
  justify-content: center;
  color: #444;
  font-size: 26px;
  letter-spacing: -0.4px;
  padding: 5px 3px 0 0;
}

.cell {
  border-right: 2px solid #dcdcdc;
  border-bottom: 2px solid #dcdcdc;
  box-sizing: border-box;
  display: flex;
  align-items: center;
  padding: 3px 5px 0 5px;
  min-width: 0;
}

.cell span {
  display: block;
  width: 100%;
  overflow: hidden;
  white-space: nowrap;
}

.cell.label {
  font-size: 29px;
  letter-spacing: 0.2px;
  padding-right: 0;
}

.cell.caps {
  font-size: 28px;
  letter-spacing: -1.2px;
  padding-right: 0;
}

.cell.num {
  text-align: right;
}

.cell.head {
  text-align: center;
  font-style: italic;
  font-size: 30px;
  letter-spacing: 0.3px;
}

.cell.merged {
  grid-column: span 2;
}

.cell.thick {
  border-bottom: 2px solid #000;
  box-shadow: 0 2px 0 #000;
}

.cell.thin {
  border-bottom: 3px solid #111;
}

.vscroll {
  flex: 1;
  display: flex;
  flex-direction: column;
  padding: 4px 4px 0 8px;
}

.sbtn {
  height: 30px;
  width: 30px;
  flex: none;
  box-sizing: border-box;
  background: #fff;
  border: 2px solid #cfcfcf;
  display: flex;
  align-items: center;
  justify-content: center;
}

.down {
  height: 27px;
  margin-top: auto;
}

.vtrack {
  flex: 1;
  background: #dedede;
  padding-top: 106px;
}

.vthumb {
  height: 367px;
  box-sizing: border-box;
  background: #fff;
  border: 2px solid #cfcfcf;
}

/* sheet tabs and scrollbar */
.sheetbar {
  height: 60px;
  flex: none;
  box-sizing: border-box;
  display: flex;
  align-items: center;
  background: #e8e8e8;
  border-top: 2px solid #9a9a9a;
  border-bottom: 2px solid #d4d4d4;
}

.sheettab {
  align-self: flex-start;
  margin-top: -2px;
  width: 135px;
  height: 53px;
  box-sizing: border-box;
  background: #fff;
  border: 2px solid #a8a8a8;
  border-top: 0;
  border-bottom: 4px solid #3b7553;
  color: #3b7553;
  font-weight: 700;
  font-size: 25px;
  letter-spacing: -0.6px;
  display: flex;
  align-items: center;
  justify-content: center;
  padding-top: 2px;
}

.addsheet {
  margin-left: 71px;
}

.hscroll {
  margin-left: auto;
  padding-right: 38px;
  display: flex;
  align-items: center;
}

.hbtn {
  width: 31px;
  height: 31px;
  box-sizing: border-box;
  background: #fff;
  border: 2px solid #cfcfcf;
  display: flex;
  align-items: center;
  justify-content: center;
}

.hscroll > svg {
  margin-right: 30px;
}

.htrack {
  width: 1010px;
  height: 31px;
  background: #dcdcdc;
  box-sizing: border-box;
  padding-left: 269px;
  margin-right: 6px;
}

.hthumb {
  width: 741px;
  height: 31px;
  box-sizing: border-box;
  background: #fff;
  border: 2px solid #c4c4c4;
}

/* status bar */
.statusbar {
  height: 46px;
  flex: none;
  display: flex;
  justify-content: flex-end;
  align-items: center;
  background: #f3f2f1;
  box-sizing: border-box;
  padding-right: 14px;
}

.viewbtn {
  width: 81px;
  height: 46px;
  background: #c8c8c8;
  display: flex;
  align-items: center;
  justify-content: center;
}

.zoomval {
  margin-left: 10px;
  font-size: 21px;
  letter-spacing: -0.5px;
  color: #666;
  width: 56px;
}

/* player */
.fade {
  height: 82px;
  flex: none;
  background: linear-gradient(#36664a 0, #2f5a41 40%, #21392a 90%, #14231a 100%);
  border-top: 2px solid #1f4a35;
  box-sizing: border-box;
}

.controls {
  height: 92px;
  flex: none;
  position: relative;
  background: #000;
}

.progress {
  position: absolute;
  left: 108px;
  right: 25px;
  top: -8px;
  height: 20px;
  background: rgba(255, 255, 255, 0.28);
  border-radius: 3px;
  overflow: hidden;
}

.bar {
  height: 100%;
  background: #2b6893;
}

.playbtn {
  position: absolute;
  left: 24px;
  top: -30px;
  width: 60px;
  height: 60px;
  border-radius: 50%;
  background: #b7c3bb;
  display: flex;
  align-items: center;
  justify-content: center;
  gap: 7px;
}

.playbtn i {
  width: 9.5px;
  height: 27px;
  background: #2a6a8f;
  border-radius: 1px;
}

.meta {
  display: flex;
  align-items: center;
  height: 41px;
  padding: 30px 28px 0 108px;
}

.time {
  font-family: "Liberation Sans", Arial, sans-serif;
  font-size: 29px;
  color: #fff;
  white-space: nowrap;
}

.cc {
  margin-left: auto;
  width: 37px;
  height: 37px;
  background: #fff;
  border-radius: 4px;
  color: #222;
  font-family: "Liberation Sans", Arial, sans-serif;
  font-weight: 700;
  font-size: 19px;
  letter-spacing: -0.5px;
  display: flex;
  align-items: center;
  justify-content: center;
}

.vol {
  margin-left: 35px;
}

.fs {
  margin-left: 29px;
}
</style>

<style>
body {
  margin: 0;
  background: #000;
}
</style>
